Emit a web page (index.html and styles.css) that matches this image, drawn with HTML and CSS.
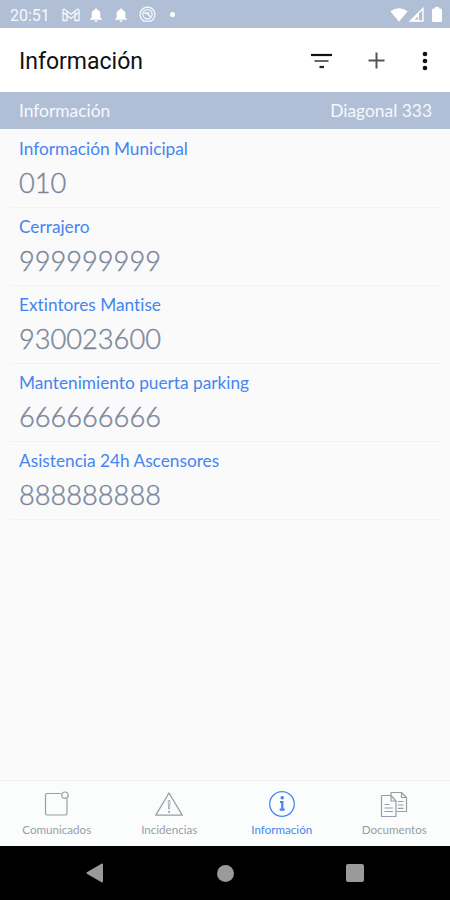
FILE: index.html
```html
<!DOCTYPE html>
<html lang="es">
<head>
  <meta charset="UTF-8">
  <meta name="viewport" content="width=device-width, initial-scale=1.0">
  <title>Información</title>
  <link rel="stylesheet" href="styles.css">
</head>
<body>
  <div class="status-bar">
    <span class="clock">20:51</span>
    <div class="notifications">
      <svg width="18" height="14" viewBox="0 0 18 14" fill="none" stroke="#f6f9fd" stroke-width="1.3" stroke-linejoin="round"><path d="M1 12.500V2.500Q1 1 2.500 1.300L9 6.200 15.500 1.300Q17 1 17 2.500V12.500H13V7.500L9 10.500 5 7.500V12.500ZM1.500 4.500 5 7.500V3.500M16.500 4.500 13 7.500V3.500"/></svg>
      <svg width="14" height="14" viewBox="0 0 14 14" fill="#fff"><path d="M7 0.500a1.200 1.200 0 0 1 1.200 1.200C10.500 2.300 11.300 4 11.300 6v3.500L13 11v.8H1V11l1.700-1.500V6c0-2 .8-3.700 3.100-4.300A1.200 1.200 0 0 1 7 .5ZM5.500 12.400h3a1.500 1.500 0 0 1-3 0Z"/></svg>
      <svg width="14" height="14" viewBox="0 0 14 14" fill="#fff"><path d="M7 0.500a1.200 1.200 0 0 1 1.200 1.200C10.500 2.300 11.300 4 11.300 6v3.500L13 11v.8H1V11l1.700-1.500V6c0-2 .8-3.700 3.100-4.300A1.200 1.200 0 0 1 7 .5ZM5.500 12.400h3a1.500 1.500 0 0 1-3 0Z"/></svg>
      <svg width="17" height="17" viewBox="0 0 17 17" fill="none" stroke="#f6f9fd" stroke-width="1.300"><path d="M5.500 15.300A7.400 7.400 0 1 1 11.500 15.300M5.500 15.200h6"/><circle cx="8.500" cy="8.300" r="4.600"/><path d="M5 7.200 7.500 6.800 11.500 11M8.800 6.200 10.500 7.500"/></svg>
      <span class="dot"></span>
    </div>
    <div class="signals">
      <svg width="18" height="14" viewBox="0 0 18 14" fill="#fff"><path d="M0.300 3.200Q9-2.800 17.700 3.200L9 13.800Z"/></svg>
      <svg width="16" height="15" viewBox="0 0 16 15"><path d="M1.500 14 14 1.500V14Z" fill="none" stroke="#fff" stroke-width="1.400"/><path d="M1 14.300 10 5V14.300Z" fill="#fff"/><path d="M5.500 12.700 8.800 9.200V12.700Z" fill="#b0bfd6"/></svg>
      <svg class="battery" width="10" height="15" viewBox="0 0 10 15" fill="#fff"><path d="M3 0h4v1.500h1.500Q10 1.500 10 3v10.500Q10 15 8.500 15h-7Q0 15 0 13.500V3Q0 1.500 1.500 1.500H3Z"/></svg>
    </div>
  </div>

  <header class="toolbar">
    <h1 class="title">Información</h1>
    <div class="actions">
      <svg width="22" height="16" viewBox="0 0 22 16"><path d="M1 2h21" stroke="#111" stroke-width="2.200"/><path d="M4.500 8h14" stroke="#666" stroke-width="2"/><path d="M9.500 14h4.500" stroke="#222" stroke-width="2.200"/></svg>
      <svg width="17" height="17" viewBox="0 0 17 17" stroke="#555" stroke-width="2"><path d="M8.500 .5v16M.5 8.500h16"/></svg>
      <svg width="6" height="20" viewBox="0 0 6 20" fill="#111"><circle cx="3" cy="3" r="2.300"/><circle cx="3" cy="10" r="2.300"/><circle cx="3" cy="17" r="2.300"/></svg>
    </div>
  </header>

  <div class="section-bar">
    <span>Información</span>
    <span>Diagonal 333</span>
  </div>

  <ul class="contacts">
    <li class="contact">
      <p class="name">Información Municipal</p>
      <p class="phone">010</p>
    </li>
    <li class="contact">
      <p class="name">Cerrajero</p>
      <p class="phone">999999999</p>
    </li>
    <li class="contact">
      <p class="name">Extintores Mantise</p>
      <p class="phone">930023600</p>
    </li>
    <li class="contact">
      <p class="name">Mantenimiento puerta parking</p>
      <p class="phone">666666666</p>
    </li>
    <li class="contact">
      <p class="name">Asistencia 24h Ascensores</p>
      <p class="phone">888888888</p>
    </li>
  </ul>

  <nav class="tabs">
    <a class="tab">
      <svg width="28" height="28" viewBox="0 0 28 28" fill="none" stroke="currentColor" stroke-width="1.200"><path d="M18 3.500H4Q2.500 3.500 2.500 5V23.500Q2.500 25 4 25H22.500Q24 25 24 23.500V9"/><circle cx="22" cy="5.200" r="3.200"/></svg>
      <span>Comunicados</span>
    </a>
    <a class="tab">
      <svg width="28" height="28" viewBox="0 0 28 28" fill="none" stroke="currentColor" stroke-width="1.300" stroke-linejoin="round"><path d="M14 3 27.200 25.200H.8Z"/><path d="M13.200 10.500h1.800l-.4 8.500h-1Z" stroke-width=".8"/><path d="M14.100 21v1.800" stroke-width="1.800"/></svg>
      <span>Incidencias</span>
    </a>
    <a class="tab active">
      <svg width="28" height="28" viewBox="0 0 28 28" fill="none" stroke="currentColor" stroke-width="1.300"><circle cx="14" cy="14" r="12.300"/><path d="M12 12h2.300v8M11.700 19.700h5" stroke-width="2.200"/><circle cx="14.200" cy="7.800" r="1.800" fill="currentColor" stroke="none"/></svg>
      <span>Información</span>
    </a>
    <a class="tab">
      <svg width="28" height="28" viewBox="0 0 28 28" fill="none" stroke="currentColor" stroke-width="1.200" stroke-linejoin="round"><path d="M1.500 5.500H11L16 11V26.500H1.500ZM11 5.500V11h5"/><path d="M11 5V2.500H21.500L26.500 7.500V21.500H16.500M21.500 2.500V7.500h5"/><path d="M4.500 14.500h5M4.500 18h8.500M4.500 21.500h8.500M18 11.500h5.500M18 15h5.500M18 18.300h5.500"/></svg>
      <span>Documentos</span>
    </a>
  </nav>

  <div class="system-nav">
    <svg width="18" height="20" viewBox="0 0 18 20" fill="#9a9a9a"><path d="M.8 9.200 15.500 .7Q17 .2 17 1.500V18.500Q17 19.800 15.500 19.300L.8 10.800Q0 10 .8 9.200Z"/></svg>
    <span class="home"></span>
    <span class="recent"></span>
  </div>
</body>
</html>
```
FILE: styles.css
```css
* {
  box-sizing: border-box;
  margin: 0;
  padding: 0;
}

body {
  display: flex;
  flex-direction: column;
  height: 900px;
  background-color: #fafafa;
  font-family: Lato, sans-serif;
  font-variant-ligatures: none;
}

svg {
  display: block;
  flex: none;
}

/* Android status bar */
.status-bar {
  display: flex;
  align-items: center;
  height: 28px;
  padding: 1px 8px 0 10px;
  background-color: #b0bfd6;
  color: #f6f9fd;
}

.clock {
  width: 52px;
  padding-top: 1px;
  font-family: Roboto, sans-serif;
  font-size: 16px;
  line-height: 27px;
}

.notifications {
  display: flex;
  align-items: center;
  gap: 11px;
}

.notifications svg:nth-child(2) {
  margin-left: -2px;
}

.dot {
  width: 5px;
  height: 5px;
  margin-left: 3px;
  border-radius: 50%;
  background-color: #fff;
}

.signals {
  display: flex;
  align-items: center;
  gap: 1px;
  margin-left: auto;
}

.battery {
  margin-left: 6px;
}

/* Toolbar */
.toolbar {
  display: flex;
  align-items: center;
  justify-content: space-between;
  height: 64px;
  padding: 1px 22px 0 19px;
  background-color: #fff;
}

.title {
  padding-top: 2px;
  font-family: Roboto, sans-serif;
  font-size: 23px;
  font-weight: 400;
  line-height: 30px;
  color: #111;
}

.actions {
  display: flex;
  align-items: center;
  gap: 36px;
}

.actions svg:last-child {
  margin-left: 1px;
}

.section-bar {
  display: flex;
  align-items: center;
  justify-content: space-between;
  height: 37px;
  padding: 0 18px 0 19px;
  background-color: #b0bfd6;
  color: #f6f9fd;
  font-size: 17.4px;
}

/* Phone list */
.contacts {
  flex: 1;
  padding: 1px 8px 0 10px;
  list-style: none;
}

.contact {
  height: 78px;
  padding: 8px 9px 0;
  border-bottom: 1px solid #f0f1f2;
}

.name {
  font-size: 17.25px;
  line-height: 22px;
  color: #4585f0;
}

.phone {
  margin-top: 6px;
  font-size: 27.2px;
  font-weight: 300;
  line-height: 34px;
  color: #7b869b;
  -webkit-text-stroke: 0.4px #7b869b;
}

/* Bottom tabs */
.tabs {
  display: flex;
  height: 66px;
  border-top: 1px solid #f0f0f1;
  background-color: #fbfcfc;
}

.tab {
  display: flex;
  flex: 1;
  flex-direction: column;
  align-items: center;
  padding: 9px 0 0 1px;
  font-size: 11.6px;
  line-height: 16px;
  color: #979ea6;
}

.tab span {
  margin-top: 4px;
}

.tab.active {
  color: #4585f0;
}

/* Android navigation buttons */
.system-nav {
  display: flex;
  align-items: center;
  justify-content: space-between;
  height: 54px;
  padding: 0 86px;
  background-color: #000;
}

.home {
  width: 17px;
  height: 17px;
  border-radius: 50%;
  background-color: #9a9a9a;
}

.recent {
  width: 18px;
  height: 18px;
  border-radius: 2px;
  background-color: #9a9a9a;
}
```
